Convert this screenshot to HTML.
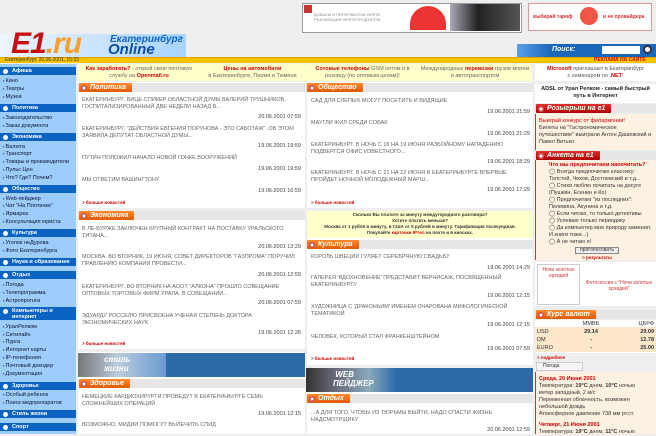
<!DOCTYPE html>
<html><head><meta charset="utf-8"><style>
*{margin:0;padding:0;box-sizing:border-box}
body{width:656px;height:434px;overflow:hidden;background:#eeeeee;font-family:"Liberation Sans",Arial,sans-serif;font-size:6px;color:#333;position:relative}
.a{position:absolute}
.nh{position:absolute;left:0;width:76px;height:8px;background:#0b63c4;color:#fff;font-weight:bold;font-size:5.5px;line-height:8px;padding-left:12px}
.nh:before{content:"";position:absolute;left:3px;top:1.5px;width:5px;height:5px;border-radius:50%;background:#fff}
.ni{position:absolute;left:3px;font-size:5.5px;color:#113;line-height:7px;white-space:nowrap}
.ni:before{content:"▪ ";font-size:4px}
.tab{position:absolute;height:9px;background:#e6e6e6}
.tab span{position:absolute;left:1px;top:0;height:9px;background:linear-gradient(#ff8a30,#e05a00);color:#fff;font-style:italic;font-weight:bold;font-size:7px;line-height:9px;padding:0 6px 0 11px;border-radius:1px}
.tab span:before{content:"";position:absolute;left:2px;top:1.5px;width:6px;height:6px;border-radius:50%;background:#fff;box-shadow:inset 0 0 0 1.5px #c44}
.t{position:absolute;font-size:5.5px;color:#666;line-height:7px;text-transform:uppercase}
.d{position:absolute;font-size:5.5px;color:#444;text-align:right}
.m{position:absolute;font-size:4.5px;color:#c00;font-weight:bold}
.rt span{background:linear-gradient(#e03030,#b00000)}
</style></head><body>
<!-- top banners -->
<div class="a" style="left:302px;top:3px;width:220px;height:30px;background:#fff;border:1px solid #999"></div>
<div class="a" style="left:304px;top:5px;width:8px;height:8px;background:#c33"></div>
<div class="a" style="left:314px;top:12px;font-size:4px;color:#888">ДОБЫЧА И ПЕРЕРАБОТКА НЕФТИ<br>РЕАЛИЗАЦИЯ НЕФТЕПРОДУКТОВ</div>
<div class="a" style="left:410px;top:6px;width:36px;height:24px;border-radius:18px 18px 0 0;background:#e33"></div>
<div class="a" style="left:450px;top:4px;width:70px;height:27px;background:linear-gradient(90deg,#aab,#222 40%,#555)"></div>
<div class="a" style="left:528px;top:3px;width:124px;height:28px;background:#fff;border:1px solid #d99"></div>
<div class="a" style="left:533px;top:14px;font-size:5px;color:#d33;font-weight:bold">выбирай тариф</div>
<div class="a" style="left:580px;top:7px;width:18px;height:18px;border-radius:50%;background:#e54"></div>
<div class="a" style="left:603px;top:14px;font-size:5px;color:#d33;font-weight:bold">и не провайдера</div>
<!-- logo -->
<div class="a" style="left:0;top:34px;width:186px;height:23px;background:linear-gradient(90deg,#eef6ff,#a8d4ff)"></div>
<div class="a" style="left:11px;top:30px;font-size:30px;font-weight:900;font-style:italic;color:#c81010;line-height:28px;letter-spacing:-1px">E1<span style="color:#f7a030">.ru</span></div>
<div class="a" style="left:110px;top:34px;font-size:10px;font-style:italic;font-weight:bold;color:#0b63c4">Екатеринбург</div>
<div class="a" style="left:108px;top:42px;font-size:15px;font-style:italic;font-weight:900;color:#0b4fa8;line-height:15px">Online</div>
<!-- search -->
<div class="a" style="left:517px;top:44px;width:139px;height:13px;background:linear-gradient(90deg,#5aa0e8,#1a66bb 25%)"></div>
<div class="a" style="left:552px;top:46px;font-size:7px;font-weight:bold;font-style:italic;color:#fff">Поиск:</div>
<div class="a" style="left:602px;top:46px;width:38px;height:8px;background:#fff"></div>
<div class="a" style="left:643px;top:45px;width:9px;height:9px;border-radius:50%;background:#fff;border:2px solid #334"></div>
<!-- yellow strip -->
<div class="a" style="left:0;top:57px;width:656px;height:6px;background:#f6c400;border-top:1px solid #e0a000"></div>
<div class="a" style="left:5px;top:57px;font-size:5px;color:#333;line-height:6px">Екатеринбург, 20.06.2001, 15:33</div>
<div class="a" style="left:594px;top:57px;font-size:5px;color:#c00;font-weight:bold;line-height:6px">РЕКЛАМА НА САЙТЕ</div>
<!-- left nav -->
<div class="a" style="left:0;top:64px;width:76px;height:370px;background:#9ccdfd"></div>
<div class="nh" style="top:67px">Афиша</div>
<div class="ni" style="top:77px">Кино</div><div class="ni" style="top:85px">Театры</div><div class="ni" style="top:93px">Музеи</div>
<div class="nh" style="top:104px">Политика</div>
<div class="ni" style="top:114px">Законодательство</div><div class="ni" style="top:122px">Заказ документа</div>
<div class="nh" style="top:133px">Экономика</div>
<div class="ni" style="top:143px">Валюта</div><div class="ni" style="top:150px">Транспорт</div><div class="ni" style="top:158px">Товары и производители</div><div class="ni" style="top:166px">Пульс Цен</div><div class="ni" style="top:174px">Что? Где? Почем?</div>
<div class="nh" style="top:185px">Общество</div>
<div class="ni" style="top:195px">Web-пейджер</div><div class="ni" style="top:202px">Чат "На Плотинке"</div><div class="ni" style="top:210px">Ярмарка</div><div class="ni" style="top:218px">Консультация юриста</div>
<div class="nh" style="top:229px">Культура</div>
<div class="ni" style="top:239px">Уголок неДурова</div><div class="ni" style="top:247px">Фото Екатеринбурга</div>
<div class="nh" style="top:258px">Наука и образование</div>
<div class="nh" style="top:271px">Отдых</div>
<div class="ni" style="top:281px">Погода</div><div class="ni" style="top:289px">Телепрограмма</div><div class="ni" style="top:297px">Астропрогноз</div>
<div class="nh" style="top:307px;height:13px;line-height:6px;padding-top:1px">Компьютеры и<br>интернет</div>
<div class="ni" style="top:323px">УралРелком</div><div class="ni" style="top:331px">Ситилайн</div><div class="ni" style="top:338px">Пурга</div><div class="ni" style="top:346px">Интернет карты</div><div class="ni" style="top:354px">IP-телефония</div><div class="ni" style="top:362px">Почтовый декодер</div><div class="ni" style="top:370px">Документация</div>
<div class="nh" style="top:382px">Здоровье</div>
<div class="ni" style="top:391px">Особый ребенок</div><div class="ni" style="top:399px">Поиск медпрепаратов</div>
<div class="nh" style="top:410px">Стиль жизни</div>
<div class="nh" style="top:423px">Спорт</div>
<!-- ad row -->
<div class="a" style="left:78px;top:64px;width:454px;height:17px;background:#ffffcc"></div>
<div class="a" style="left:79px;top:66px;width:120px;text-align:center;font-size:5.5px;color:#666;line-height:7px"><b style="color:#c00">Как заработать?</b> - открой свою почтовую службу на <b style="color:#c00">Openmail.ru</b></div>
<div class="a" style="left:200px;top:66px;width:105px;text-align:center;font-size:5.5px;color:#666;line-height:7px"><b style="color:#c00">Цены на автомобили</b><br>в Екатеринбурге, Перми и Тюмени</div>
<div class="a" style="left:310px;top:66px;width:105px;text-align:center;font-size:5.5px;color:#666;line-height:7px"><b style="color:#c00">Сотовые телефоны</b> GSM оптом и в розницу (по оптовым ценам)!</div>
<div class="a" style="left:420px;top:66px;width:110px;text-align:center;font-size:5.5px;color:#666;line-height:7px">Международные <b style="color:#c00">перевозки</b> грузов морем и автотранспортом</div>
<!-- col A -->
<div class="a" style="left:78px;top:82px;width:227px;height:352px;background:#fff"></div>
<div class="tab" style="left:78px;top:83px;width:227px"><span>Политика</span></div>
<div class="t" style="left:82px;top:97px;width:220px">Екатеринбург. Вице-спикер областной думы Валерий Трушников, госпитализированный две недели назад в...</div>
<div class="d" style="left:200px;top:114px;width:101px">20.06.2001 07:59</div>
<div class="t" style="left:82px;top:126px;width:220px">Екатеринбург. "Действия Евгения Порунова - это саботаж". Об этом заявила депутат областной думы...</div>
<div class="d" style="left:200px;top:143px;width:101px">19.06.2001 19:59</div>
<div class="t" style="left:82px;top:155px;width:220px">Путин положил начало новой гонке вооружений</div>
<div class="d" style="left:200px;top:166px;width:101px">19.06.2001 19:59</div>
<div class="t" style="left:82px;top:177px;width:220px">Мы ответим Вашингтону</div>
<div class="d" style="left:200px;top:188px;width:101px">19.06.2001 16:59</div>
<div class="m" style="left:82px;top:200px">&gt; больше новостей</div>
<div class="a" style="left:78px;top:208px;width:227px;height:3px;background:#eee"></div>
<div class="tab" style="left:78px;top:211px;width:227px"><span>Экономика</span></div>
<div class="t" style="left:82px;top:226px;width:220px">В Ле-Бурже заключен крупный контракт на поставку уральского титана...</div>
<div class="d" style="left:200px;top:244px;width:101px">20.06.2001 13:29</div>
<div class="t" style="left:82px;top:254px;width:220px">Москва. Во вторник, 19 июня, совет директоров "Газпрома" поручил правлению компании провести...</div>
<div class="d" style="left:200px;top:272px;width:101px">20.06.2001 12:59</div>
<div class="t" style="left:82px;top:284px;width:220px">Екатеринбург. Во вторник на АООТ "Алкона" прошло совещание оптовых торговых фирм Урала. В совещании...</div>
<div class="d" style="left:200px;top:300px;width:101px">20.06.2001 07:59</div>
<div class="t" style="left:82px;top:313px;width:220px">Эдуарду Росселю присвоена ученая степень доктора экономических наук</div>
<div class="d" style="left:200px;top:330px;width:101px">19.06.2001 12:26</div>
<div class="m" style="left:82px;top:341px">&gt; больше новостей</div>
<div class="a" style="left:78px;top:349px;width:227px;height:3px;background:#eee"></div>
<div class="a" style="left:78px;top:353px;width:227px;height:24px;background:#2d6aa8"></div>
<div class="a" style="left:78px;top:353px;width:88px;height:24px;background:linear-gradient(90deg,#777,#bcd 45%,#6a9ad0)"></div>
<div class="a" style="left:104px;top:355px;font-size:8px;font-style:italic;font-weight:bold;color:#fff;line-height:9px">стиль<br>жизни</div>
<div class="tab" style="left:78px;top:379px;width:227px"><span>Здоровье</span></div>
<div class="t" style="left:82px;top:394px;width:220px">Немецкие кардиохирурги проведут в Екатеринбурге семь сложнейших операций</div>
<div class="d" style="left:200px;top:411px;width:101px">19.06.2001 12:15</div>
<div class="t" style="left:82px;top:422px;width:220px">Возможно, мидии помогут вылечить СПИД</div>
<!-- col B -->
<div class="a" style="left:307px;top:82px;width:226px;height:352px;background:#fff"></div>
<div class="tab" style="left:306px;top:83px;width:227px"><span>Общество</span></div>
<div class="t" style="left:311px;top:98px;width:220px">Сад для слепых могут посетить и видящие</div>
<div class="d" style="left:430px;top:109px;width:100px">19.06.2001 21:59</div>
<div class="t" style="left:311px;top:120px;width:220px">Маугли жил среди собак</div>
<div class="d" style="left:430px;top:131px;width:100px">19.06.2001 21:29</div>
<div class="t" style="left:311px;top:142px;width:220px">Екатеринбург. В ночь с 18 на 19 июня разбойному нападению подвергся офис известного...</div>
<div class="d" style="left:430px;top:159px;width:100px">19.06.2001 18:29</div>
<div class="t" style="left:311px;top:170px;width:220px">Екатеринбург. В ночь с 21 на 22 июня в Екатеринбурге впервые пройдет ночной молодежный марш...</div>
<div class="d" style="left:430px;top:187px;width:100px">19.06.2001 17:29</div>
<div class="m" style="left:311px;top:200px">&gt; больше новостей</div>
<div class="a" style="left:307px;top:208px;width:226px;height:3px;background:#eee"></div>
<div class="a" style="left:307px;top:211px;width:226px;height:27px;background:#ffffcc;text-align:center;font-size:4.5px;font-weight:bold;color:#333;line-height:6px;padding-top:1px">Сколько Вы платите за минуту междугородного разговора?<br>Хотите платить меньше?<br>Москва от 1 рубля в минуту, в США от 5 рублей в минуту. Тарификация посекундная.<br>Покупайте <span style="color:#c00">карточки IPтел</span> на почте и в киосках.</div>
<div class="tab" style="left:306px;top:240px;width:227px"><span>Культура</span></div>
<div class="t" style="left:311px;top:254px;width:220px">Король Швеции гуляет серебряную свадьбу</div>
<div class="d" style="left:430px;top:265px;width:100px">19.06.2001 14:29</div>
<div class="t" style="left:311px;top:275px;width:200px">Галерея 'Вдохновение' представит вернисаж, посвященный Екатеринбургу</div>
<div class="d" style="left:430px;top:293px;width:100px">19.06.2001 12:15</div>
<div class="t" style="left:311px;top:304px;width:205px">Художница с 'драконьим' именем очарована мифологической тематикой</div>
<div class="d" style="left:430px;top:322px;width:100px">19.06.2001 12:15</div>
<div class="t" style="left:311px;top:334px;width:220px">Человек, который стал Франкенштейном</div>
<div class="d" style="left:430px;top:346px;width:100px">19.06.2001 07:59</div>
<div class="m" style="left:311px;top:356px">&gt; больше новостей</div>
<div class="a" style="left:307px;top:365px;width:226px;height:3px;background:#eee"></div>
<div class="a" style="left:306px;top:368px;width:227px;height:24px;background:#2d6aa8"></div>
<div class="a" style="left:306px;top:368px;width:90px;height:24px;background:linear-gradient(90deg,#333,#667 30%,#8ab 70%,#2d6aa8)"></div>
<div class="a" style="left:333px;top:370px;font-size:8px;font-style:italic;font-weight:bold;color:#fff;line-height:9px">&nbsp;WEB<br>ПЕЙДЖЕР</div>
<div class="tab" style="left:306px;top:394px;width:227px"><span>Отдых</span></div>
<div class="t" style="left:311px;top:410px;width:205px">...А для того, чтобы из тюрьмы выйти, надо спасти жизнь надсмотрщику</div>
<div class="d" style="left:430px;top:427px;width:100px">20.06.2001 12:59</div>
<!-- right col -->
<div class="a" style="left:535px;top:64px;width:121px;height:17px;background:#fff;text-align:center;font-size:5.5px;color:#555;line-height:7px;padding-top:2px"><b style="color:#c00">Microsoft</b> приглашает в Екатеринбург<br>с семинаром по <b style="color:#c00">.NET</b>!</div>
<div class="a" style="left:535px;top:84px;width:121px;height:19px;background:#fff;text-align:center;font-size:5.5px;color:#222;font-weight:bold;line-height:7px;padding-top:2px">ADSL от Урал Релком - самый быстрый путь в Интернет</div>
<div class="tab rt" style="left:535px;top:104px;width:121px"><span>Розыгрыш на e1</span></div>
<div class="a" style="left:535px;top:114px;width:121px;height:36px;background:#fdf1e2;border-left:1px solid #c33;font-size:5.5px;color:#333;line-height:7px;padding:4px 3px"><span style="color:#c00">Выиграй конкурс от филармонии!</span><br>Билеты на "Гастрономическое путешествие" выиграли Антон Дашевский и Павел Витько</div>
<div class="tab rt" style="left:535px;top:151px;width:121px"><span>Анкета на e1</span></div>
<div class="a" style="left:535px;top:160px;width:121px;height:100px;background:#fdf1e2;border-left:1px solid #c33;font-size:5.5px;color:#333;line-height:7px;padding:2px 2px 0 4px">
<div style="color:#c00;font-weight:bold;text-align:center">Что мы предпочитаем напочитать?</div>
<div style="padding-left:9px">◯ Всегда предпочитаю классику: Толстой, Чехов, Достоевский и т.д...<br>◯ Стихи люблю почитать на досуге (Пушкин, Есенин и Ко)<br>◯ Предпочитаю "из последних": Пелевина, Акунина и т.д.<br>◯ Если читаю, то только детективы<br>◯ Успеваю только периодику<br>◯ Да компьютер мне природу заменил. И книги тоже...)<br>◯ А не читаю я!</div>
<div style="margin:1px auto 0;width:44px;height:7px;border:1px solid #888;background:#eee;text-align:center;font-size:5px;line-height:5px">проголосовать</div>
<div style="text-align:center;color:#c00;font-size:4.5px;font-weight:bold">&gt; результаты</div></div>
<div class="a" style="left:535px;top:262px;width:121px;height:44px;background:#fff"></div>
<div class="a" style="left:537px;top:264px;width:43px;height:41px;border:1px solid #ccc;font-size:5px;color:#c33;text-align:center;line-height:6px;padding-top:2px">Ночи золотых орхидей</div>
<div class="a" style="left:585px;top:280px;width:68px;font-size:5px;color:#c33;text-align:center;line-height:6px">Фотосессия с "Ночи золотых орхидей"</div>
<div class="tab" style="left:535px;top:310px;width:121px"><span>Курс валют</span></div>
<div class="a" style="left:535px;top:320px;width:121px;height:33px;background:#fff"></div>
<div class="a" style="left:535px;top:327px;width:121px;height:25px;background:#fde8cc"></div>
<div class="a" style="left:537px;top:320px;width:117px;font-size:5.5px;line-height:8px;color:#333">
<div style="display:flex"><span style="width:30px"></span><span style="width:48px;text-align:center">ММВБ</span><span style="flex:1;text-align:right">ЦБРФ</span></div>
<div style="display:flex"><span style="width:30px">USD</span><b style="width:48px;text-align:center">29.14</b><b style="flex:1;text-align:right">29.09</b></div>
<div style="display:flex"><span style="width:30px">DM</span><b style="width:48px;text-align:center">-</b><b style="flex:1;text-align:right">12.78</b></div>
<div style="display:flex"><span style="width:30px">EURO</span><b style="width:48px;text-align:center">-</b><b style="flex:1;text-align:right">25.00</b></div></div>
<div class="m" style="left:537px;top:355px">&gt; подробнее</div>
<div class="a" style="left:536px;top:362px;width:47px;height:9px;border:1px solid #ccc;background:#f4f4f4;font-size:5px;line-height:7px;padding-left:6px">Погода</div>
<div class="a" style="left:535px;top:372px;width:121px;height:62px;background:#fdf1e2;border-left:1px solid #c33;font-size:5.5px;color:#333;line-height:7px;padding:4px 3px">
<b style="color:#c00">Среда, 20 Июня 2001</b><br>Температура: <b>19°C</b> днем, <b>10°C</b> ночью<br>ветер западный, 2 м/с<br>Переменная облачность, возможен небольшой дождь<br>Атмосферное давление 738 мм рт.ст.<br><div style="height:4px"></div><b style="color:#c00">Четверг, 21 Июня 2001</b><br>Температура: <b>19°C</b> днем, <b>11°C</b> ночью</div>
</body></html>
